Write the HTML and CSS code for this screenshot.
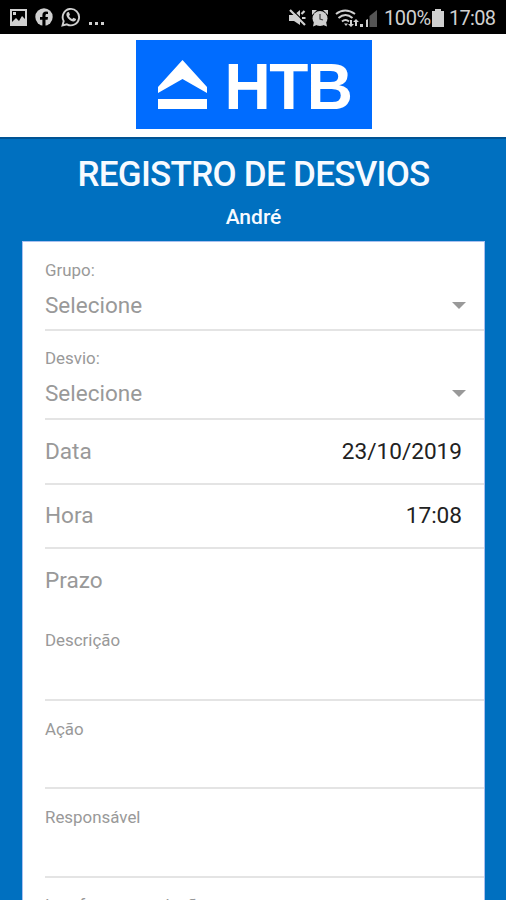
FILE: index.html
```html
<!DOCTYPE html>
<html lang="pt-BR">
<head>
<meta charset="utf-8">
<title>Registro de Desvios</title>
<link rel="stylesheet" href="styles.css">
</head>
<body>
<div class="status">
  <div class="status-left">
    <svg width="17" height="17" viewBox="0 0 17 17"><path fill="#d0d0d0" fill-rule="evenodd" d="M0 0h17v17H0zM2 2v11l4-4 3 3 3-5 3 3V2zM3 3h3v3H3z"/></svg>
    <svg width="18" height="18" viewBox="0 0 18 18"><circle cx="9" cy="9" r="8.7" fill="#d0d0d0"/><path fill="#000" d="M7.4 18v-6.300H5V9h2.400V7.200C7.400 4.800 8.800 3.500 11 3.500l2 .2V6h-1.200c-1 0-1.300.6-1.300 1.300V9H13l-.4 2.700h-2.100V18z"/></svg>
    <svg width="20" height="20" viewBox="0 0 20 20"><path fill="none" stroke="#d0d0d0" stroke-width="1.900" d="M1.500 18.500l1.200-4.400a8.200 8.200 0 1 1 3.200 3.200z"/><path fill="#d0d0d0" d="M6.500 5.200l1.400-.2 1.100 2.800-1 1.200c.7 1.400 1.700 2.300 3.200 3l1.200-1.300 2.700 1.300c0 1.800-1.500 2.500-2.800 2.400-3.200-.4-6.600-3.800-6.900-6.500 0-1.100.4-2.200 1.100-2.700z"/></svg>
    <span class="dots"><i></i><i></i><i></i></span>
  </div>
  <div class="status-right">
    <svg class="mute" width="17" height="18" viewBox="0 0 17 18"><path fill="#d0d0d0" d="M0 6h5l6-5v15l-6-4H0z"/><path stroke="#000" stroke-width="1.200" d="M2.500 0l15 15"/><path stroke="#d0d0d0" stroke-width="2.200" d="M1 1l15 15M12.500 5l3-3M13 9h3.500"/></svg>
    <svg class="alarm" width="18" height="18" viewBox="0 0 18 18"><g fill="#d0d0d0"><circle cx="9" cy="9.500" r="7.500"/><path d="M1 6V1h5zM17 6V1h-5zM2 17.500l1-5 4 3zM16 17.500l-1-5-4 3z"/></g><path fill="none" stroke="#444" stroke-width="1.300" d="M9 5v5l3 1"/></svg>
    <svg class="wifi" width="24" height="18" viewBox="0 0 24 18"><g fill="none" stroke="#d0d0d0" stroke-width="2"><path d="M1 5q9-7 19 0M3.500 9q7-6 14 0M7 12.500q3.500-3 7 0"/></g><path fill="#d0d0d0" d="M9 14.500h4L11 17zM15 11h2v4h2l-3 3-3-3h2zM20 17v-4h-2l3-3 3 3h-2v4z"/></svg>
    <svg class="signal" width="18" height="17" viewBox="0 0 18 17"><path fill="#d0d0d0" d="M0 14h3v3H0zM6 10l2-1v8H6z"/><path fill="#555" d="M9.500 6l2.500-2v13H9.500zM12 4l5-4v17h-5z"/></svg>
    <span class="pct">100%</span>
    <svg class="battery" width="12" height="18" viewBox="0 0 12 18"><path fill="#d0d0d0" d="M3 0h6v2h3v16H0V2h3z"/></svg>
    <span class="clock">17:08</span>
  </div>
</div>
<header class="brand">
  <div class="logo">
    <svg width="49" height="49" viewBox="0 0 49 49"><path fill="#fff" d="M24.500 0L49 27v6L24.500 19 0 33v-6zM0 39h49v10H0z"/></svg>
    <span class="logo-name">HTB</span>
  </div>
</header>
<main>
  <h1>REGISTRO DE DESVIOS</h1>
  <h2>André</h2>
  <form class="card">
    <div class="field select"><label>Grupo:</label><div class="value"><span>Selecione</span><b class="caret"></b></div></div>
    <div class="field select"><label>Desvio:</label><div class="value"><span>Selecione</span><b class="caret"></b></div></div>
    <div class="field row"><span>Data</span><strong>23/10/2019</strong></div>
    <div class="field row"><span>Hora</span><strong>17:08</strong></div>
    <div class="field row due"><span>Prazo</span></div>
    <div class="field text"><label>Descrição</label></div>
    <div class="field text"><label>Ação</label></div>
    <div class="field text"><label>Responsável</label></div>
    <div class="field text last"><label>Interfere na produção</label></div>
  </form>
</main>
</body>
</html>
```
FILE: styles.css
```css
* { box-sizing: border-box; }
body { margin: 0; height: 900px; overflow: hidden; display: flex; flex-direction: column; background: #0070c0; font-family: Roboto, sans-serif; }
svg { display: block; flex: none; }
.status { height: 34px; flex: none; background: #000; color: #d0d0d0; display: flex; justify-content: space-between; padding: 0 10px; }
.status-left, .status-right { display: flex; align-items: center; }
.status-left { gap: 8px; }
.status-right { font-size: 20px; padding-top: 2px; }
.dots { display: flex; gap: 3px; padding-top: 13px; }
.dots i { width: 3px; height: 3px; background: #d0d0d0; }
.alarm { margin-left: 5px; }
.wifi { margin-left: 6px; }
.signal { margin-left: 1px; }
.pct { margin-left: 6px; width: 46px; letter-spacing: -.4px; }
.battery { margin-left: 2px; }
.clock { margin-left: 5px; width: 47px; letter-spacing: -.7px; }
.brand { height: 103px; flex: none; background: #fff; padding: 6px 0 0 1px; display: flex; justify-content: center; }
.logo { width: 236px; height: 89px; background: #006cff; display: flex; align-items: flex-start; padding: 20px 0 0 22px; }
.logo-name { font: bold 64px/64px "Liberation Sans", sans-serif; letter-spacing: -1.500px; color: #fff; margin: -5px 0 0 18px; }
main { flex: 1; min-height: 0; border-top: 2px solid #005394; display: flex; flex-direction: column; }
h1 { margin: 16px 0 0 1px; font-size: 35px; line-height: 40px; font-weight: 500; letter-spacing: -.72px; text-align: center; color: #f7faff; white-space: nowrap; }
h2 { margin: 10px 0 0 1px; font-size: 21px; line-height: 24px; font-weight: 500; text-align: center; color: #f7faff; }
.card { margin: 12px 21px 0 22px; flex: 1; min-height: 0; overflow: hidden; background: #fff; border: 1px solid #a9c0ef; border-bottom: 0; padding-left: 22px; color: #999; }
.field { border-bottom: 2px solid #e4e4e4; }
.field label { display: block; font-size: 16.900px; line-height: 20px; }
.select { height: 89px; padding-top: 18px; }
.value { display: flex; justify-content: space-between; align-items: center; font-size: 22.500px; line-height: 28px; margin-top: 11px; padding-right: 18px; }
.select + .select { padding-top: 17px; }
.caret { border: 7px solid transparent; border-top-color: #999; border-bottom: 0; }
.row { height: 64.500px; display: flex; align-items: center; justify-content: space-between; padding-right: 22px; font-size: 22.600px; }
.row strong { color: #222; font-weight: 400; }
.due { height: 63px; border-bottom: 0; }
.text { height: 88.500px; padding-top: 18px; }
.last { padding-top: 17px; }
```
